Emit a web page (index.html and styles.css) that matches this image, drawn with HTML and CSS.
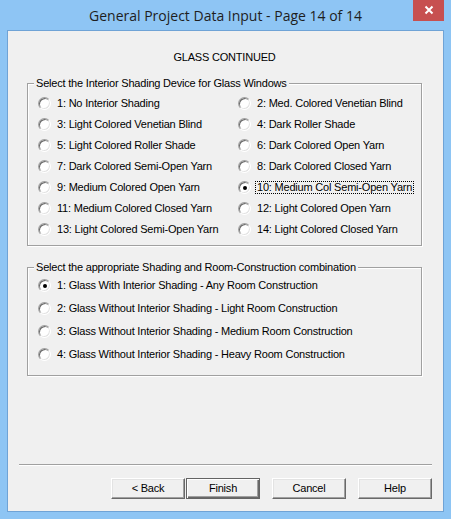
FILE: index.html
```html
<!DOCTYPE html>
<html>
<head>
<meta charset="utf-8">
<title>General Project Data Input - Page 14 of 14</title>
<link rel="stylesheet" href="styles.css">
</head>
<body>
<div class="window">
  <div class="titlebar">
    <div class="title">General Project Data Input - Page 14 of 14</div>
    <div class="close">
      <svg width="10" height="10" viewBox="0 0 10 10"><path d="M1.5 1.5 L8.5 8.5 M8.5 1.5 L1.5 8.5" stroke="#fff" stroke-width="2" fill="none"/></svg>
    </div>
  </div>
  <div class="client">
    <div class="heading">GLASS CONTINUED</div>

    <div class="group group-shading">
      <div class="group-title">Select the Interior Shading Device for Glass Windows</div>
      <div class="grid">
        <div class="opt"><span class="radio"></span><span class="lbl">1: No Interior Shading</span></div>
        <div class="opt"><span class="radio"></span><span class="lbl">2: Med. Colored Venetian Blind</span></div>
        <div class="opt"><span class="radio"></span><span class="lbl">3: Light Colored Venetian Blind</span></div>
        <div class="opt"><span class="radio"></span><span class="lbl">4: Dark Roller Shade</span></div>
        <div class="opt"><span class="radio"></span><span class="lbl">5: Light Colored Roller Shade</span></div>
        <div class="opt"><span class="radio"></span><span class="lbl">6: Dark Colored Open Yarn</span></div>
        <div class="opt"><span class="radio"></span><span class="lbl">7: Dark Colored Semi-Open Yarn</span></div>
        <div class="opt"><span class="radio"></span><span class="lbl">8: Dark Colored Closed Yarn</span></div>
        <div class="opt"><span class="radio"></span><span class="lbl">9: Medium Colored Open Yarn</span></div>
        <div class="opt"><span class="radio checked"></span><span class="lbl focus">10: Medium Col Semi-Open Yarn</span></div>
        <div class="opt"><span class="radio"></span><span class="lbl">11: Medium Colored Closed Yarn</span></div>
        <div class="opt"><span class="radio"></span><span class="lbl">12: Light Colored Open Yarn</span></div>
        <div class="opt"><span class="radio"></span><span class="lbl">13: Light Colored Semi-Open Yarn</span></div>
        <div class="opt"><span class="radio"></span><span class="lbl">14: Light Colored Closed Yarn</span></div>
      </div>
    </div>

    <div class="group group-combo">
      <div class="group-title">Select the appropriate Shading and Room-Construction combination</div>
      <div class="list">
        <div class="opt"><span class="radio checked"></span><span class="lbl">1: Glass With Interior Shading - Any Room Construction</span></div>
        <div class="opt"><span class="radio"></span><span class="lbl">2: Glass Without Interior Shading - Light Room Construction</span></div>
        <div class="opt"><span class="radio"></span><span class="lbl">3: Glass Without Interior Shading - Medium Room Construction</span></div>
        <div class="opt"><span class="radio"></span><span class="lbl">4: Glass Without Interior Shading - Heavy Room Construction</span></div>
      </div>
    </div>

    <div class="separator"></div>
    <div class="buttons">
      <div class="btn">&lt; Back</div>
      <div class="btn default">Finish</div>
      <div class="btn gap">Cancel</div>
      <div class="btn gap">Help</div>
    </div>
  </div>
</div>
</body>
</html>
```
FILE: styles.css
```css
html, body {
  margin: 0;
  padding: 0;
}
body {
  width: 451px;
  height: 519px;
  overflow: hidden;
  font-family: "Liberation Sans", Arial, sans-serif;
  font-size: 11px;
  letter-spacing: -0.2px;
  color: #000;
}
.window {
  width: 451px;
  height: 519px;
  box-sizing: border-box;
  background: #8ec5f4;
  display: flex;
  flex-direction: column;
  padding: 0 7px 7px 7px;
}
.titlebar {
  height: 30px;
  flex: none;
  display: grid;
  grid-template-columns: 1fr auto 1fr;
}
.title {
  grid-column: 2;
  align-self: center;
  font-family: "Open Sans", "Noto Sans", sans-serif;
  font-size: 14px;
  letter-spacing: 0;
  color: #1e1e1e;
  line-height: 20px;
  padding-top: 1px;
}
.close {
  grid-column: 3;
  justify-self: end;
  align-self: start;
  width: 31px;
  height: 21px;
  background: #c75050;
  display: flex;
  align-items: center;
  justify-content: center;
}
.close svg {
  display: block;
  margin-top: -1px;
}
.client {
  flex: 1;
  border: 1px solid #6fa3d6;
  background: #f0f0f0;
  display: flex;
  flex-direction: column;
  padding: 20px 0 12px 0;
}
.heading {
  line-height: 13px;
  text-align: center;
  margin: 0 21px 0 19px;
}
.group {
  margin: 0 21px 0 19px;
  border: 1px solid #a0a0a0;
  box-shadow: 1px 1px 0 #fff, inset 1px 1px 0 #fff;
}
.group-shading {
  margin-top: 19px;
  padding: 0 0 5px 10px;
}
.group-combo {
  margin-top: 21px;
  padding: 0 0 9px 10px;
}
.group-title {
  margin: -7px 0 0 -4px;
  padding: 0 2px;
  line-height: 13px;
  background: #f0f0f0;
  width: fit-content;
}
.group-shading .group-title {
  margin-bottom: 3px;
}
.grid {
  display: grid;
  grid-template-columns: 200px 1fr;
  grid-auto-rows: 21px;
}
.list {
  display: grid;
  grid-auto-rows: 23px;
}
.opt {
  display: flex;
  align-items: center;
  white-space: nowrap;
}
.radio {
  width: 13px;
  height: 13px;
  box-sizing: border-box;
  flex: none;
  border-radius: 50%;
  border: 1px solid;
  border-color: #a0a0a0 #ffffff #ffffff #a0a0a0;
  background: #fff;
  box-shadow: inset 1px 1px 0 #696969, inset -1px -1px 0 #e3e3e3;
  margin-right: 4px;
  display: flex;
  align-items: center;
  justify-content: center;
}
.radio.checked::after {
  content: "";
  width: 4px;
  height: 4px;
  border-radius: 50%;
  background: #000;
}
.lbl {
  border: 1px solid transparent;
  padding: 0 1px;
  line-height: 11px;
}
.lbl.focus {
  border: 1px dotted #000;
}
.separator {
  margin: auto 11px 12px 11px;
  height: 1px;
  background: #a0a0a0;
  border-bottom: 1px solid #fff;
  flex: none;
}
.buttons {
  display: flex;
  justify-content: flex-end;
  margin-right: 11px;
}
.btn {
  width: 74px;
  height: 21px;
  box-sizing: border-box;
  border: 1px solid;
  border-color: #fff #696969 #696969 #fff;
  box-shadow: inset -1px -1px 0 #a0a0a0, inset 1px 1px 0 #e3e3e3;
  background: #f0f0f0;
  display: flex;
  align-items: center;
  justify-content: center;
  line-height: 13px;
}
.btn.default {
  margin-left: 1px;
  border: 1px solid #646464;
  box-shadow: inset 1px 1px 0 #fff, inset -1px -1px 0 #696969, inset -2px -2px 0 #a0a0a0;
}
.btn.gap {
  margin-left: 12px;
}
```
